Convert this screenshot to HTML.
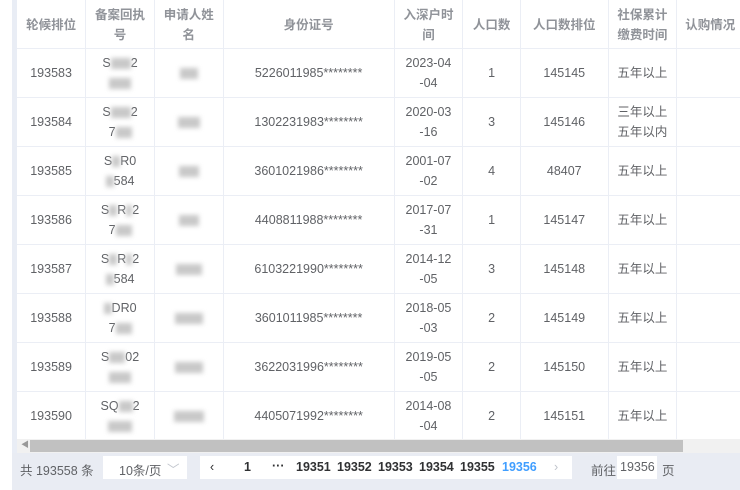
<!DOCTYPE html>
<html><head><meta charset="utf-8"><style>
*{margin:0;padding:0;box-sizing:border-box}
body{width:740px;height:490px;overflow:hidden;background:#fff;font-family:"Liberation Sans","Noto Sans CJK SC",sans-serif;color:#606266;position:relative}
.strip{position:absolute;left:12px;top:0;width:5px;height:490px;background:#e9edf5}
.wrap{position:absolute;left:17px;top:0;width:740px}
table{border-collapse:collapse;table-layout:fixed}
td,th{border-right:1px solid #ebeef5;border-bottom:1px solid #ebeef5;text-align:center;font-size:12.5px;line-height:20px;overflow:hidden;white-space:nowrap}
th{height:48px;color:#909399;font-weight:bold;font-size:12.5px;line-height:20px;padding-top:2px}
td{height:49px;color:#606266}
.bl{display:inline-block;background:#c8c8c8;filter:blur(2.5px);height:11px;vertical-align:middle}
.scroll{position:absolute;left:17px;top:439px;width:723px;height:14px;background:#f1f1f1}
.thumb{position:absolute;left:13px;top:1px;width:653px;height:12px;background:#c1c1c1}
.foot{position:absolute;left:12px;top:453px;width:728px;height:37px;background:#e9ecf3;font-size:12.5px;color:#606266}
.foot span{position:absolute;top:7px}
.box{position:absolute;background:#fff;top:3px;height:23px}
</style></head><body>
<div class="strip"></div>
<div class="wrap"><table>
<colgroup><col style="width:69px"><col style="width:69px"><col style="width:69px"><col style="width:172px"><col style="width:69px"><col style="width:58px"><col style="width:88px"><col style="width:69px"><col style="width:80px"></colgroup>
<tr><th>轮候排位</th><th>备案回执<br>号</th><th>申请人姓<br>名</th><th>身份证号</th><th>入深户时<br>间</th><th>人口数</th><th>人口数排位</th><th>社保累计<br>缴费时间</th><th style="text-align:left;padding-left:8px">认购情况</th></tr>
<tr><td>193583</td><td>S<span class="bl" style="width:20px"></span>2<br><span class="bl" style="width:22px"></span></td><td><span class="bl" style="width:18px"></span></td><td>5226011985********</td><td>2023-04<br>-04</td><td>1</td><td>145145</td><td>五年以上</td><td></td></tr>
<tr><td>193584</td><td>S<span class="bl" style="width:20px"></span>2<br>7<span class="bl" style="width:16px"></span></td><td><span class="bl" style="width:22px"></span></td><td>1302231983********</td><td>2020-03<br>-16</td><td>3</td><td>145146</td><td>三年以上<br>五年以内</td><td></td></tr>
<tr><td>193585</td><td>S<span class="bl" style="width:8px"></span>R0<br><span class="bl" style="width:8px"></span>584</td><td><span class="bl" style="width:20px"></span></td><td>3601021986********</td><td>2001-07<br>-02</td><td>4</td><td>48407</td><td>五年以上</td><td></td></tr>
<tr><td>193586</td><td>S<span class="bl" style="width:8px"></span>R<span class="bl" style="width:6px"></span>2<br>7<span class="bl" style="width:16px"></span></td><td><span class="bl" style="width:20px"></span></td><td>4408811988********</td><td>2017-07<br>-31</td><td>1</td><td>145147</td><td>五年以上</td><td></td></tr>
<tr><td>193587</td><td>S<span class="bl" style="width:8px"></span>R<span class="bl" style="width:6px"></span>2<br><span class="bl" style="width:8px"></span>584</td><td><span class="bl" style="width:26px"></span></td><td>6103221990********</td><td>2014-12<br>-05</td><td>3</td><td>145148</td><td>五年以上</td><td></td></tr>
<tr><td>193588</td><td><span class="bl" style="width:8px"></span>DR0<br>7<span class="bl" style="width:16px"></span></td><td><span class="bl" style="width:28px"></span></td><td>3601011985********</td><td>2018-05<br>-03</td><td>2</td><td>145149</td><td>五年以上</td><td></td></tr>
<tr><td>193589</td><td>S<span class="bl" style="width:16px"></span>02<br><span class="bl" style="width:22px"></span></td><td><span class="bl" style="width:28px"></span></td><td>3622031996********</td><td>2019-05<br>-05</td><td>2</td><td>145150</td><td>五年以上</td><td></td></tr>
<tr><td>193590</td><td>SQ<span class="bl" style="width:14px"></span>2<br><span class="bl" style="width:24px"></span></td><td><span class="bl" style="width:30px"></span></td><td>4405071992********</td><td>2014-08<br>-04</td><td>2</td><td>145151</td><td>五年以上</td><td></td></tr>
</table></div>
<div class="scroll"><span style="position:absolute;left:4px;top:0;font-size:8px;color:#999">◀</span><div class="thumb"></div></div>
<div class="foot">
<span style="left:8px">共 193558 条</span>
<div class="box" style="left:91px;width:84px"><span style="left:16px;top:4px">10条/页</span><span style="left:64px;top:3px;color:#c0c4cc">﹀</span></div>
<div class="box" style="left:188px;width:372px;font-weight:bold;color:#303133">
<span style="left:10px;top:4px;font-weight:normal">‹</span>
<span style="left:44px;top:4px">1</span>
<span style="left:72px;top:3px">···</span>
<span style="left:96px;top:4px">19351</span>
<span style="left:137px;top:4px">19352</span>
<span style="left:178px;top:4px">19353</span>
<span style="left:219px;top:4px">19354</span>
<span style="left:260px;top:4px">19355</span>
<span style="left:302px;top:4px;color:#409eff">19356</span>
<span style="left:354px;top:4px;color:#c0c4cc;font-weight:normal">›</span>
</div>
<span style="left:579px">前往</span>
<div class="box" style="left:605px;width:40px"><span style="left:3px;top:4px">19356</span></div>
<span style="left:650px">页</span>
</div>
</body></html>
